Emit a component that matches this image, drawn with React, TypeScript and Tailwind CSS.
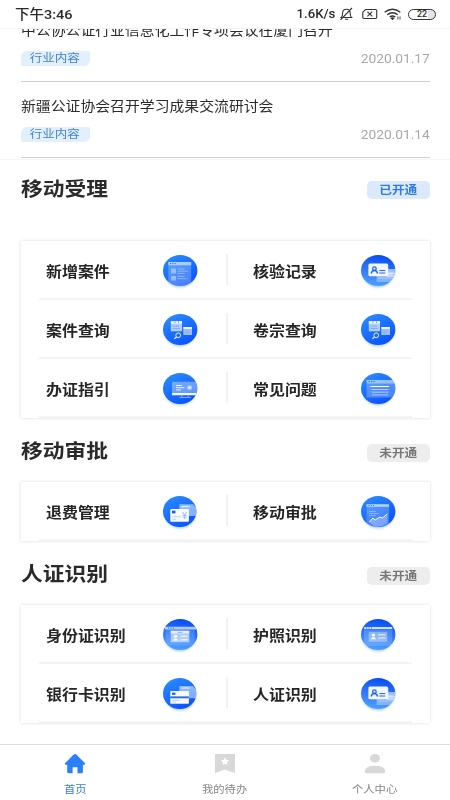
import type { ReactNode } from "react"

type IconName =
  | "form"
  | "record"
  | "search"
  | "guide"
  | "faq"
  | "refund"
  | "chart"
  | "idcard"
  | "passport"
  | "bank"

type Item = { label: string; icon: IconName }

const news = [
  { title: "中公协公证行业信息化工作专项会议在厦门召开", tag: "行业内容", date: "2020.01.17" },
  { title: "新疆公证协会召开学习成果交流研讨会", tag: "行业内容", date: "2020.01.14" },
]

const acceptItems: Item[][] = [
  [{ label: "新增案件", icon: "form" }, { label: "核验记录", icon: "record" }],
  [{ label: "案件查询", icon: "search" }, { label: "卷宗查询", icon: "search" }],
  [{ label: "办证指引", icon: "guide" }, { label: "常见问题", icon: "faq" }],
]

const approveItems: Item[][] = [
  [{ label: "退费管理", icon: "refund" }, { label: "移动审批", icon: "chart" }],
]

const identifyItems: Item[][] = [
  [{ label: "身份证识别", icon: "idcard" }, { label: "护照识别", icon: "passport" }],
  [{ label: "银行卡识别", icon: "bank" }, { label: "人证识别", icon: "record" }],
]

const glyphs: Record<IconName, ReactNode> = {
  form: (
    <>
      <path d="M5.3 7h22.9v24H5.3z" fill="#fff" opacity=".25" />
      <path d="M5.3 7h22.9v3.2H5.3z" fill="#fff" opacity=".5" />
      <path d="M7 8.5h1.2M9.3 8.5h1.2M11.6 8.5h1.2" stroke="#2f7dff" strokeWidth="1.1" />
      <path d="M8 13.5h5v5H8zM8 21h5v4.5H8z" fill="#fff" opacity=".4" />
      <path d="M14.5 14h7M14.5 16.2h10.5M14.5 18.4h7M14.5 21.5h7M14.5 23.7h10" stroke="#fff" strokeWidth="1" opacity=".35" />
    </>
  ),
  record: (
    <>
      <path d="M15.5 17h17v10h-17z" fill="#fff" opacity=".35" />
      <path d="M26 14h8.3v8H26z" fill="#fff" opacity=".55" />
      <path d="M27 18.5h7M17 23h15" stroke="#fff" strokeWidth=".8" opacity=".5" />
      <rect x="7.4" y="8.4" width="19.8" height="12.8" rx="1.5" fill="#f3f8ff" />
      <path d="M10.2 18.5c.4-2 1.5-3 3.2-3s2.8 1 3.2 3" fill="none" stroke="#1b5fff" strokeWidth="1.4" />
      <circle cx="13.4" cy="13.7" r="1.8" fill="none" stroke="#1b5fff" strokeWidth="1.3" />
      <path d="M18.3 15.6h6M18.3 18h6" stroke="#1b5fff" strokeWidth="1" />
    </>
  ),
  search: (
    <>
      <path d="M7.8 7.3H19v10H7.8z" fill="#fff" opacity=".65" />
      <path d="M7.8 7.3H19v2.2H7.8z" fill="#fff" />
      <path d="M11.5 8.3h1M15 8.3h1" stroke="#2674ff" strokeWidth="1" />
      <path d="M9.5 12h6.5M9.5 14.5h7.5" stroke="#6ba2ff" strokeWidth=".7" />
      <path d="M20.3 13H29v8h-8.7z" fill="#fff" opacity=".6" />
      <path d="M20.3 13H29v1.9h-8.7z" fill="#fff" opacity=".85" />
      <path d="M22 17h5M22 19h4" stroke="#6ba2ff" strokeWidth=".6" />
      <circle cx="15.2" cy="21.3" r="2.4" fill="none" stroke="#e8f1ff" strokeWidth="1" />
      <path d="m13.5 23-2.2 1.8" stroke="#e8f1ff" strokeWidth="1.2" />
    </>
  ),
  guide: (
    <>
      <path d="M9 8.8h26V20H9z" fill="#fff" opacity=".36" />
      <path d="M9 20h26v2.2H9z" fill="#f4f8ff" />
      <path d="M13 12.5h6M13 14.7h8.5M13 16.9h5" stroke="#fff" strokeWidth="1" opacity=".85" />
      <circle cx="26.5" cy="14.6" r="2.6" fill="#fff" opacity=".4" />
      <circle cx="26.5" cy="14.6" r="1.2" fill="#fff" opacity=".85" />
      <path d="M18.7 22.3v2M25 22.3v2M16.5 24.5h11.5" stroke="#8fb8ff" strokeWidth=".9" />
    </>
  ),
  faq: (
    <>
      <path d="M5.6 7H35v17.6H5.6z" fill="#fff" opacity=".25" />
      <path d="M5.6 7H35v3.4H5.6z" fill="#fff" opacity=".4" />
      <path d="M7.5 8.5h1.2M10 8.5h1.2M12.5 8.5h1.2" stroke="#1d63ff" strokeWidth="1" />
      <path d="M9.5 13.5h18.5" stroke="#fff" strokeWidth="1.1" />
      <path d="M11 16.5h16.5M11 19.2h16.5M11 21.9h16.5" stroke="#fff" strokeWidth=".9" opacity=".6" />
    </>
  ),
  refund: (
    <>
      <path d="M16.3 8.2H30l3.4 4V20H16.3z" fill="#fff" opacity=".5" />
      <path d="M18.5 10.7h8" stroke="#fff" strokeWidth=".9" />
      <path d="M26 14.2h7.5M26 17h7.5" stroke="#7fb0ff" strokeWidth=".7" />
      <rect x="7.3" y="13" width="18.6" height="12.8" rx=".7" fill="#f8faff" />
      <path d="M9 14.7h3.5v2.7H9z" fill="#1b5fe6" />
      <path d="M9.3 20.7h8.5M9.3 23.2h4" stroke="#aac8ff" strokeWidth=".8" />
      <path d="m19.5 16 2.1 3 2.1-3M21.6 19v4M19.6 19.3h4M19.6 21.2h4" fill="none" stroke="#8fb7ff" strokeWidth=".9" />
    </>
  ),
  chart: (
    <>
      <path d="M5.5 8.2H28V31H5.5z" fill="#fff" opacity=".22" />
      <path d="M5.5 8.2H28v2.6H5.5z" fill="#fff" opacity=".6" />
      <path d="M7.3 9.5h1.1M9.6 9.5h1.1M11.9 9.5h1.1" stroke="#2674ff" strokeWidth="1" />
      <path d="M8 15.4h7M8 17.5h10M8 19.6h7" stroke="#fff" strokeWidth=".8" opacity=".45" />
      <path d="m8.3 26 3.5-3.8 2.6 1.6 4-2.6 3.2.7 4.8-4v9.6q-7 4-13 3z" fill="#fff" opacity=".3" />
      <path d="m8.3 26 3.5-3.8 2.6 1.6 4-2.6 3.2.7 4.8-4" fill="none" stroke="#fff" strokeWidth="1" />
    </>
  ),
  idcard: (
    <>
      <path d="M2.8 10.4h28.8v16.2H2.8z" fill="#fff" opacity=".15" />
      <path d="M2 7.8h31v2.6H2z" fill="#fff" opacity=".65" />
      <path d="M5 9h1M7.5 9h1M10 9h1" stroke="#1b5fff" strokeWidth="1" />
      <path d="M7.7 11.8h18.6v11.5H7.7z" fill="#fff" opacity=".55" />
      <path d="M7.7 11.8h18.6v2.7H7.7z" fill="#fff" opacity=".7" />
      <path d="M14.5 13.4h5" stroke="#7aa9ff" strokeWidth=".8" />
      <circle cx="12.6" cy="17.3" r="1.6" fill="#fff" />
      <path d="M9.8 21.5q2.8-4.2 5.6 0z" fill="#fff" />
      <path d="M17.5 17.2h7M17.5 20.8h7" stroke="#fff" strokeWidth="1" />
    </>
  ),
  passport: (
    <>
      <path d="M3 10.3h28.3v16.5H3z" fill="#fff" opacity=".18" />
      <path d="M3.3 8h28v2H3z" fill="#fff" opacity=".8" />
      <path d="M5 9h1M7.5 9h1M10 9h1" stroke="#1b5fff" strokeWidth="1" />
      <path d="M7.7 12.8h18.6v10H7.7z" fill="#fff" opacity=".35" />
      <circle cx="12.4" cy="16" r="1.6" fill="#fff" />
      <path d="M9.6 20.3q2.8-4.6 5.6 0z" fill="#fff" />
      <path d="M17 15.7h7.5M17 19h7.5" stroke="#fff" strokeWidth="1.1" opacity=".85" />
    </>
  ),
  bank: (
    <>
      <path d="M16.3 8H30l3.4 4v8.2H16.3z" fill="#fff" opacity=".5" />
      <path d="M18.5 10h8" stroke="#fff" strokeWidth=".9" />
      <path d="M26 14.2h7.5M26 17h7.5" stroke="#7fb0ff" strokeWidth=".7" />
      <rect x="7.3" y="13" width="18.6" height="12.8" rx=".7" fill="#f8faff" />
      <path d="M9 14.7h3.5v2.1H9z" fill="#1b5fe6" />
      <path d="M7.3 18.4h18.6v1.9H7.3z" fill="#2467ef" />
      <path d="M9.3 22.3h7M9.3 24.2h3.5" stroke="#aac8ff" strokeWidth=".8" />
    </>
  ),
}

// these start dark at the top, the rest run light to dark
const darkTop: IconName[] = ["record", "idcard", "passport"]
const clipped: IconName[] = ["form", "guide", "faq", "chart", "idcard"]

function RoundIcon({ name, id }: { name: IconName; id: string }) {
  const flip = darkTop.includes(name)
  const rx = name === "refund" || name === "bank" ? 16.7 : 17.2
  return (
    <svg width="42" height="39" viewBox="-4 -3 42 39" className="shrink-0">
      <defs>
        <linearGradient id={id} x1={flip ? "0.6" : "0.2"} y1="0" x2={flip ? "0.4" : "0.8"} y2="1">
          <stop offset="0" stopColor={flip ? "#084cf2" : "#2a8bfc"} />
          <stop offset="1" stopColor={flip ? "#4fa0ff" : "#0850ff"} />
        </linearGradient>
        <filter id={id + "s"} x="-20%" y="-20%" width="140%" height="150%">
          <feGaussianBlur stdDeviation="1.3" />
        </filter>
        <clipPath id={id + "c"}>
          <ellipse cx={rx} cy="15.5" rx={rx} ry="15.5" />
        </clipPath>
      </defs>
      <ellipse cx="17" cy="18" rx="15.5" ry="14.5" fill="#2f7dff" opacity=".35" filter={`url(#${id}s)`} />
      <ellipse cx={rx} cy="15.5" rx={rx} ry="15.5" fill={`url(#${id})`} />
      <g clipPath={clipped.includes(name) ? `url(#${id}c)` : undefined}>{glyphs[name]}</g>
    </svg>
  )
}

function Cell({ item, id }: { item: Item; id: string }) {
  return (
    <>
      <span className="mt-1 inline-block origin-left scale-x-110 whitespace-nowrap text-[14.5px] leading-5 font-bold text-[#262626]">
        {item.label}
      </span>
      <RoundIcon name={item.icon} id={id} />
    </>
  )
}

function Card({ rows, name }: { rows: Item[][]; name: string }) {
  return (
    <div className="mr-5 ml-[21px] bg-white shadow-[0_0_3px_rgba(0,0,0,0.15)]">
      {rows.map((row, i) => (
        <div key={i} className="mx-[18px] flex h-[59px] items-center border-b-2 border-[#f4f4f4]">
          <div className="flex w-[187px] items-center justify-between pt-[3px] pr-[25px] pl-[7px]">
            <Cell item={row[0]} id={`${name}-${i}-a`} />
          </div>
          <div className="h-[31px] w-0.5 bg-[#f1f1f1]" />
          <div className="flex flex-1 items-center justify-between pt-[3px] pr-[13.5px] pl-[25px]">
            <Cell item={row[1]} id={`${name}-${i}-b`} />
          </div>
        </div>
      ))}
    </div>
  )
}

function SectionTitle({ title, open }: { title: string; open?: boolean }) {
  return (
    <div className="flex h-7 items-center justify-between pr-5 pl-[21px]">
      <h2 className="origin-left scale-x-110 text-[19.8px] leading-7 font-bold text-[#2a2a2a]">{title}</h2>
      <div
        className={
          open
            ? "flex h-[18px] w-[63px] items-center justify-center rounded-[5px] bg-[#dce9fb] text-[#2e7be4]"
            : "mt-px flex h-[18px] w-[63px] items-center justify-center rounded-[5px] bg-[#ededed] text-[#777]"
        }
      >
        <span className="scale-x-110 text-[11.5px] leading-4 font-bold">{open ? "已开通" : "未开通"}</span>
      </div>
    </div>
  )
}

function StatusBar() {
  return (
    <header className="relative z-10 flex h-[29px] shrink-0 items-center justify-between border-b border-[#f3f3f3] bg-white pr-[14px] pl-[15px] text-[#2a2a2a]">
      <span className="origin-left scale-x-110 pt-px text-[13.2px] font-medium">下午3:46</span>
      <div className="flex items-center">
        <span className="mr-[4px] origin-right scale-x-110 text-[12px] font-medium">1.6K/s</span>
        <svg width="15" height="14" viewBox="0 0 15 14" fill="none" stroke="#333" strokeWidth="1.1">
          <path d="M2.2 10.5h10.3c-1.3-1.2-1.2-2.4-1.3-4.4C11 3.7 9.5 2.3 7.4 2.3S3.7 3.7 3.6 6.1c-.1 2 0 3.2-1.4 4.4zM6 12.3h3M13 1 1.5 12.8" />
        </svg>
        <svg width="16" height="12" viewBox="0 0 16 12" fill="none" stroke="#333" strokeWidth="1.1" className="ml-[8px]">
          <path d="M3.5 1.5h10q1.2 0 1.2 1.2v6.6q0 1.2-1.2 1.2H1.9q-1.1 0-1.1-1.2V4.2zM5.4 3.7l4.8 4.6M10.2 3.7 5.4 8.3" />
        </svg>
        <svg width="18" height="13" viewBox="0 0 18 13" fill="none" stroke="#333" strokeWidth="1.4" className="ml-[6px]">
          <path d="M.7 4.2q7.8-6 15.6 0M3.2 6.7q5.3-4 10.6 0M5.7 9q2.8-2 5.6 0" />
          <path d="m6.3 10 2.2 2.2 2.2-2.2q-2.2-1.5-4.4 0z" fill="#333" stroke="none" />
          <path d="M13.9 8.5v3M16 8.5v3" strokeWidth=".9" />
        </svg>
        <div className="ml-[6px] flex h-[11px] w-[28px] items-center justify-center rounded-full border border-[#333] bg-[linear-gradient(90deg,#fff_72%,#e6e6e6_72%)] text-[9px] leading-none font-medium">
          22
        </div>
      </div>
    </header>
  )
}

function NewsRow({ title, tag, date }: { title: string; tag: string; date: string }) {
  return (
    <div className="mr-5 ml-[21px] flex h-[76px] flex-col border-b border-[#cfcfcf]">
      <div className="h-[34px] pt-[12px]">
        <span className="inline-block origin-left scale-x-110 whitespace-nowrap text-[13.5px] leading-[18px] text-[#2b2b2b]">
          {title}
        </span>
      </div>
      <div className="flex items-center justify-between pt-[11px]">
        <span className="flex h-[15px] w-[69px] items-center justify-center rounded-[2px] rounded-tl-[6px] rounded-br-[6px] bg-[#e2effc] pr-px text-[#4285cf]">
          <span className="scale-x-110 text-[11.4px] leading-[15px]">{tag}</span>
        </span>
        <span className="origin-right scale-x-110 text-[12.5px] leading-[15px] text-[#a5a8ad]">{date}</span>
      </div>
    </div>
  )
}

function TabBar() {
  return (
    <nav className="grid h-14 shrink-0 grid-cols-3 border-t border-[#dedede] bg-white text-[#858585]">
      <div className="flex flex-col items-center pt-[9px] text-[#3b7ed0]">
        <svg width="22" height="20" viewBox="0 0 22 20" fill="#2a80fb">
          <path d="M9.7.6q1.3-1.1 2.6 0L21 9.3q.8 1.2-.8 1.5H18.9v7q0 1.4-1.4 1.4h-4v-6H8.6v6h-4q-1.4 0-1.4-1.4v-7H1.8Q.2 10.5 1 9.3z" />
        </svg>
        <span className="mt-[8px] scale-x-110 text-[10.3px] leading-4">首页</span>
      </div>
      <div className="flex flex-col items-center pt-[9px]">
        <svg width="20" height="20" viewBox="0 0 20 20">
          <path d="M0 0h20v19l-10-3.5L0 19z" fill="#d8d8d8" />
          <path d="m10 3.3 1.3 2.4 2.7.5-1.9 2 .3 2.7-2.4-1.1-2.4 1.1.3-2.7-1.9-2 2.7-.5z" fill="#fff" />
        </svg>
        <span className="mt-[8px] scale-x-110 text-[10.3px] leading-4">我的待办</span>
      </div>
      <div className="flex flex-col items-center pt-[9px]">
        <svg width="22" height="20" viewBox="0 0 22 20" fill="#d8d8d8">
          <ellipse cx="11" cy="4.3" rx="5" ry="4.3" />
          <path d="M.8 17.5q0-5.8 10.2-5.8t10.2 5.8q0 1.7-1.7 1.7h-17Q.8 19.2.8 17.5z" />
        </svg>
        <span className="mt-[8px] scale-x-110 text-[10.3px] leading-4">个人中心</span>
      </div>
    </nav>
  )
}

export default function App() {
  return (
    <div className="flex h-[800px] w-[450px] flex-col overflow-hidden bg-white font-[Roboto,'Noto_Sans_CJK_SC',sans-serif]">
      <StatusBar />
      <main className="min-h-0 flex-1 overflow-hidden">
        <section className="-mt-[23px] border-b border-[#f6f6f6] pb-px">
          {news.map((item) => (
            <NewsRow key={item.date} {...item} />
          ))}
        </section>
        <section className="pt-4">
          <SectionTitle title="移动受理" open />
          <div className="h-[37px]" />
          <Card rows={acceptItems} name="accept" />
        </section>
        <section className="pt-5">
          <SectionTitle title="移动审批" />
          <div className="h-4" />
          <Card rows={approveItems} name="approve" />
        </section>
        <section className="pt-5">
          <SectionTitle title="人证识别" />
          <div className="h-4" />
          <Card rows={identifyItems} name="identify" />
        </section>
      </main>
      <TabBar />
    </div>
  )
}
